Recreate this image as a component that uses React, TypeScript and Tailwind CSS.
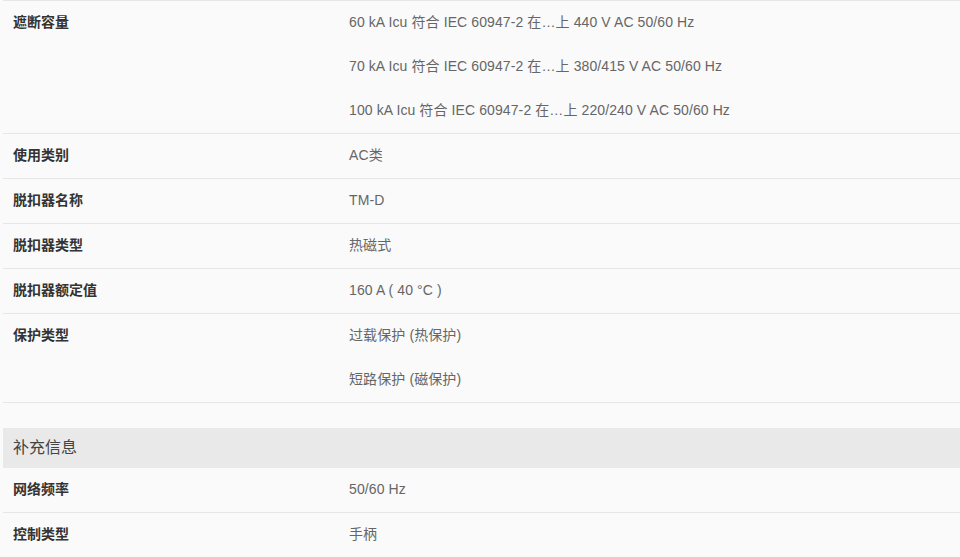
import React from "react";

type Row = { label: string; values: string[] };

const rows1: Row[] = [
  {
    label: "遮断容量",
    values: [
      "60 kA Icu 符合 IEC 60947-2 在…上 440 V AC 50/60 Hz",
      "70 kA Icu 符合 IEC 60947-2 在…上 380/415 V AC 50/60 Hz",
      "100 kA Icu 符合 IEC 60947-2 在…上 220/240 V AC 50/60 Hz",
    ],
  },
  { label: "使用类别", values: ["AC类"] },
  { label: "脱扣器名称", values: ["TM-D"] },
  { label: "脱扣器类型", values: ["热磁式"] },
  { label: "脱扣器额定值", values: ["160 A ( 40 °C )"] },
  { label: "保护类型", values: ["过载保护 (热保护)", "短路保护 (磁保护)"] },
];

const rows2: Row[] = [
  { label: "网络频率", values: ["50/60 Hz"] },
  { label: "控制类型", values: ["手柄"] },
];

function SpecRow({ row }: { row: Row }) {
  return (
    <div className="grid grid-cols-[336px_1fr] border-b border-[#e6e6e6]">
      <div className="px-[10px] pt-[11px] pb-[13px] text-[14px] leading-5 font-bold text-[#333]">{row.label}</div>
      <div className="flex flex-col">
        {row.values.map((v, i) => (
          <div key={i} className="px-[10px] pt-[11px] pb-[13px] text-[14px] leading-5 tracking-[0.1px] text-[#666]">
            {v}
          </div>
        ))}
      </div>
    </div>
  );
}

export default function App() {
  return (
    <div
      className="w-full h-screen overflow-hidden bg-[#fafafa] pl-[3px]"
      style={{ fontFamily: '"Liberation Sans", Arial, "Noto Sans CJK SC", sans-serif' }}
    >
      <div className="border-t border-[#e6e6e6]">
        {rows1.map((r) => (
          <SpecRow key={r.label} row={r} />
        ))}
      </div>
      <div className="mt-[25px] h-[40px] w-full bg-[#e9e9e9] px-[10px] flex items-center text-[16px] text-[#444]">
        补充信息
      </div>
      <div>
        {rows2.map((r) => (
          <SpecRow key={r.label} row={r} />
        ))}
      </div>
    </div>
  );
}
